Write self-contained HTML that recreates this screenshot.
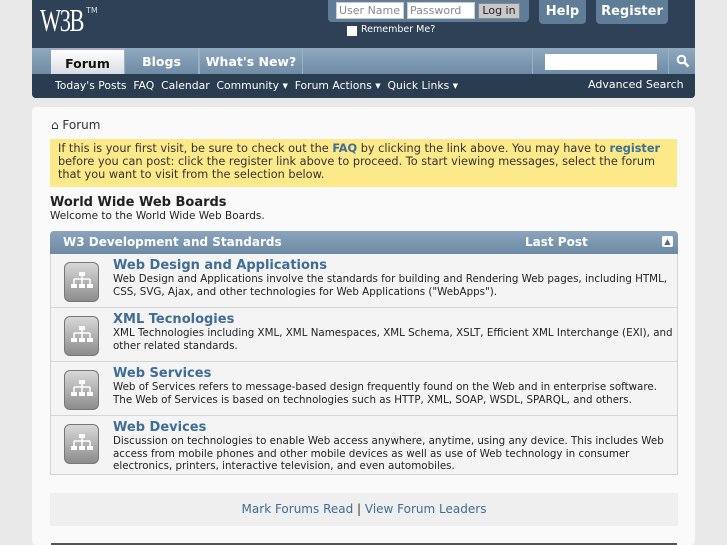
<!DOCTYPE html>
<html><head><style>
*{margin:0;padding:0;box-sizing:border-box}
body{width:727px;height:545px;overflow:hidden;background:#e9e9e9;font-family:"DejaVu Sans","Liberation Sans",sans-serif;font-size:11px;color:#222;position:relative}
.abs{position:absolute}
#hdr{left:32px;top:0;width:663px;height:98px;background:#2e4157;border-radius:0 0 4px 4px}
#nav{left:32px;top:48px;width:663px;height:26px;background:linear-gradient(#8fa9be,#6f8ca5)}
#sub{left:32px;top:74px;width:663px;height:24px;background:#2a3c50;color:#fff;font-size:11px;border-radius:0 0 4px 4px}
.tab{top:48px;height:26px;color:#fff;font-weight:bold;font-size:12.5px;text-align:center;line-height:27px;border-right:1px solid #9bb1c3}
.btn{background:#5f7d97;color:#fff;font-weight:bold;font-size:13px;text-align:center;line-height:24px;border-radius:0 0 4px 4px;top:0;height:24px}
input{border:1px solid #ccc}
#main{left:32px;top:107px;width:663px;height:438px;background:#fafafa;border-radius:4px}
.row{left:50px;width:628px;height:54px;background:#f4f4f4;border:1px solid #d4d4d4;border-top:none}
.row .ic{position:absolute;left:13px;top:8px;width:35px;height:40px;border-radius:6px;background:linear-gradient(#d8d8d8,#8c8c8c);border:1px solid #777}
.row .ic svg{position:absolute;left:6px;top:9px}
.row .t{position:absolute;left:62px;top:4px;color:#3e6d96;font-weight:bold;font-size:13px}
.row .d{position:absolute;left:62px;top:19px;right:4px;font-size:10.3px;line-height:12.5px;color:#222}
</style></head><body>
<div id="hdr" class="abs"></div>
<div class="abs" style="left:40px;top:2px;color:#fff;font-size:32px;font-family:'Liberation Serif',serif;letter-spacing:-2px;transform:scaleX(.7);transform-origin:left">W3B</div>
<div class="abs" style="left:86px;top:6px;color:#ddd;font-size:8px">TM</div>
<div class="abs" style="left:328px;top:0;width:201px;height:22px;background:#5f7d97;border-radius:0 0 4px 4px"></div>
<input class="abs" style="left:336px;top:2px;width:68px;height:17px;font-size:11px;padding-left:2px;color:#888;font-family:inherit" value="User Name">
<input class="abs" style="left:407px;top:2px;width:68px;height:17px;font-size:11px;padding-left:2px;color:#888;font-family:inherit" value="Password">
<div class="abs" style="left:478px;top:3px;width:42px;height:16px;background:#c8c8c8;border:1px solid #888;font-size:11px;text-align:center;line-height:14px">Log in</div>
<div class="abs" style="left:347px;top:26px;width:10px;height:10px;background:#fff"></div>
<div class="abs" style="left:361px;top:24px;color:#fff;font-size:9.5px">Remember Me?</div>
<div class="abs btn" style="left:539px;width:47px">Help</div>
<div class="abs btn" style="left:596px;width:72px">Register</div>
<div id="nav" class="abs"></div>
<div class="abs tab" style="left:51px;width:74px;background:linear-gradient(#fff,#d8dde2);color:#111;border-top:2px solid #aac">Forum</div>
<div class="abs tab" style="left:125px;width:74px">Blogs</div>
<div class="abs tab" style="left:199px;width:104px;border-left:1px solid #9bb1c3">What's New?</div>
<div class="abs" style="left:532px;top:48px;width:1px;height:26px;background:#9bb1c3"></div>
<div class="abs" style="left:545px;top:54px;width:112px;height:16px;background:#fff"></div>
<div class="abs" style="left:668px;top:48px;width:1px;height:26px;background:#9bb1c3"></div>
<svg class="abs" style="left:676px;top:54px" width="14" height="14"><circle cx="5.5" cy="5.5" r="3.8" fill="none" stroke="#fff" stroke-width="2"/><path d="M8.5 8.5L12.5 12.5" stroke="#fff" stroke-width="2.5"/></svg>
<div id="sub" class="abs"></div>
<div class="abs" style="left:55px;top:79px;color:#fff;font-size:10.8px;white-space:nowrap">Today's Posts&nbsp; FAQ&nbsp; Calendar&nbsp; Community ▾&nbsp; Forum Actions ▾&nbsp; Quick Links ▾</div>
<div class="abs" style="left:588px;top:78px;color:#fff;font-size:11px">Advanced Search</div>
<div id="main" class="abs"></div>
<div class="abs" style="left:51px;top:118px;font-size:12px;color:#333">&#8962; Forum</div>
<div class="abs" style="left:50px;top:139px;width:627px;height:48px;background:#fbe98a;padding:3px 8px;font-size:11.3px;line-height:13px;color:#333">If this is your first visit, be sure to check out the <b style="color:#3e6d96">FAQ</b> by clicking the link above. You may have to <b style="color:#3e6d96">register</b> before you can post: click the register link above to proceed. To start viewing messages, select the forum that you want to visit from the selection below.</div>
<div class="abs" style="left:50px;top:195px;font-weight:bold;font-size:13px;color:#222">World Wide Web Boards</div>
<div class="abs" style="left:50px;top:210px;font-size:10.5px">Welcome to the World Wide Web Boards.</div>
<div class="abs" style="left:50px;top:231px;width:628px;height:23px;background:linear-gradient(#8aa5bc,#6c8aa3);border-radius:4px 4px 0 0;color:#fff;font-weight:bold;font-size:12px;line-height:22px;padding-left:13px">W3 Development and Standards<span style="position:absolute;left:475px">Last Post</span><span style="position:absolute;right:5px;top:5px;width:11px;height:11px;background:#fff;border-radius:2px;color:#4a6b88;font-size:8px;line-height:11px;text-align:center">▲</span></div>
<div class="abs row" style="top:254px"><div class="ic"><svg width="22" height="20"><path d="M11 1v6M3 7h16M3 7v5M11 7v5M19 7v5" stroke="#fff" stroke-width="1.5" fill="none"/><rect x="8" y="0" width="6" height="4" fill="#fff"/><rect x="0" y="12" width="6" height="4" fill="#fff"/><rect x="8" y="12" width="6" height="4" fill="#fff"/><rect x="16" y="12" width="6" height="4" fill="#fff"/></svg></div><div class="t">Web Design and Applications</div><div class="d">Web Design and Applications involve the standards for building and Rendering Web pages, including HTML, CSS, SVG, Ajax, and other technologies for Web Applications ("WebApps").</div></div>
<div class="abs row" style="top:308px"><div class="ic"><svg width="22" height="20"><path d="M11 1v6M3 7h16M3 7v5M11 7v5M19 7v5" stroke="#fff" stroke-width="1.5" fill="none"/><rect x="8" y="0" width="6" height="4" fill="#fff"/><rect x="0" y="12" width="6" height="4" fill="#fff"/><rect x="8" y="12" width="6" height="4" fill="#fff"/><rect x="16" y="12" width="6" height="4" fill="#fff"/></svg></div><div class="t">XML Tecnologies</div><div class="d">XML Technologies including XML, XML Namespaces, XML Schema, XSLT, Efficient XML Interchange (EXI), and other related standards.</div></div>
<div class="abs row" style="top:362px"><div class="ic"><svg width="22" height="20"><path d="M11 1v6M3 7h16M3 7v5M11 7v5M19 7v5" stroke="#fff" stroke-width="1.5" fill="none"/><rect x="8" y="0" width="6" height="4" fill="#fff"/><rect x="0" y="12" width="6" height="4" fill="#fff"/><rect x="8" y="12" width="6" height="4" fill="#fff"/><rect x="16" y="12" width="6" height="4" fill="#fff"/></svg></div><div class="t">Web Services</div><div class="d">Web of Services refers to message-based design frequently found on the Web and in enterprise software. The Web of Services is based on technologies such as HTTP, XML, SOAP, WSDL, SPARQL, and others.</div></div>
<div class="abs row" style="top:416px;height:59px"><div class="ic"><svg width="22" height="20"><path d="M11 1v6M3 7h16M3 7v5M11 7v5M19 7v5" stroke="#fff" stroke-width="1.5" fill="none"/><rect x="8" y="0" width="6" height="4" fill="#fff"/><rect x="0" y="12" width="6" height="4" fill="#fff"/><rect x="8" y="12" width="6" height="4" fill="#fff"/><rect x="16" y="12" width="6" height="4" fill="#fff"/></svg></div><div class="t">Web Devices</div><div class="d">Discussion on technologies to enable Web access anywhere, anytime, using any device. This includes Web access from mobile phones and other mobile devices as well as use of Web technology in consumer electronics, printers, interactive television, and even automobiles.</div></div>
<div class="abs" style="left:50px;top:493px;width:628px;height:33px;background:#efefef;text-align:center;line-height:33px;font-size:12px;color:#3e6d96">Mark Forums Read <span style="color:#333">|</span> View Forum Leaders</div>
<div class="abs" style="left:51px;top:543px;width:626px;height:2px;background:#555"></div>
</body></html>
